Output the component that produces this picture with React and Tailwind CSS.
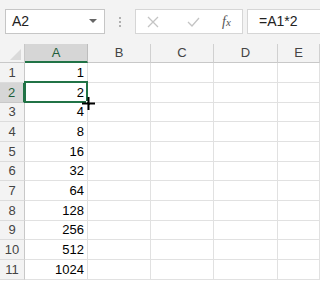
import React from 'react'

const font = { fontFamily: '"Liberation Sans", Arial, sans-serif' }

const cols = ['A', 'B', 'C', 'D', 'E']
const colW = ['w-[63px]', 'w-[63px]', 'w-[63px]', 'w-[64px]', 'flex-1']
const rows = [1, 2, 4, 8, 16, 32, 64, 128, 256, 512, 1024]
const rowH = ['h-[20px]', 'h-[20px]', 'h-[19px]', 'h-[20px]', 'h-[20px]', 'h-[19px]', 'h-[20px]', 'h-[20px]', 'h-[19px]', 'h-[20px]', 'h-[20px]']

function TopBar() {
  return (
    <div className="flex h-[44px] items-start bg-[#f3f3f3] pt-[9px] pl-[5px]">
      <div className="flex h-[25px] w-[100px] items-center justify-between border border-[#c6c6c6] bg-white pl-[6px] pr-[7px]">
        <span className="text-[14px] text-[#222]">A2</span>
        <svg width="8" height="5" viewBox="0 0 8 5"><path d="M0 0h8L4 4z" fill="#666" /></svg>
      </div>
      <div className="flex w-[30px] flex-col items-center gap-[2px] pt-[8px]">
        <span className="h-[2px] w-[2px] bg-[#b0b0b0]" />
        <span className="h-[2px] w-[2px] bg-[#b0b0b0]" />
        <span className="h-[2px] w-[2px] bg-[#b0b0b0]" />
      </div>
      <div className="flex h-[25px] w-[108px] items-center border border-[#d6d6d6] bg-white">
        <svg className="ml-[11px]" width="12" height="12" viewBox="0 0 12 12"><path d="M1 1l10 10M11 1L1 11" stroke="#c4c4c4" strokeWidth="1.3" /></svg>
        <svg className="ml-[28px]" width="13" height="10" viewBox="0 0 13 10"><path d="M1 5l4 4 7-8" stroke="#c4c4c4" strokeWidth="1.3" fill="none" /></svg>
        <span className="ml-[22px] text-[14px] italic text-[#555]" style={{ fontFamily: '"Liberation Serif", serif' }}>f<span className="text-[11px]">x</span></span>
      </div>
      <div className="ml-[4px] flex h-[25px] flex-1 items-center border border-r-0 border-[#d6d6d6] bg-white pl-[11px]">
        <span className="text-[14px] text-[#222]">=A1*2</span>
      </div>
    </div>
  )
}

function HeaderRow() {
  return (
    <div className="flex h-[19px]">
      <div className="relative w-[25px] border-r border-b border-[#c8c8c8] bg-[#f3f3f3]">
        <svg className="absolute right-[3px] bottom-[2px]" width="11" height="11" viewBox="0 0 11 11"><path d="M11 0v11H0z" fill="#dadada" /></svg>
      </div>
      {cols.map((c, i) => (
        <div
          key={c}
          className={`${colW[i]} flex items-center justify-center text-[13px] ${
            i === 0
              ? 'border-b-2 border-r border-b-[#217346] border-r-[#bdbdbd] bg-[#d6d6d6] text-[#1e5e3a]'
              : 'border-r border-b border-r-[#d0d0d0] border-b-[#c8c8c8] bg-[#f3f3f3] text-[#444]'
          }`}
        >
          {c}
        </div>
      ))}
    </div>
  )
}

function Row({ n, v }) {
  const sel = n === 2
  return (
    <div className={`flex ${rowH[n - 1]}`}>
      <div
        className={`flex w-[25px] items-center justify-center border-b text-[13px] ${
          sel
            ? 'border-r-2 border-r-[#217346] border-b-[#c8c8c8] bg-[#d6d6d6] text-[#1e5e3a]'
            : 'border-r border-r-[#c8c8c8] border-b-[#dcdcdc] bg-[#f3f3f3] text-[#444]'
        }`}
      >
        {n}
      </div>
      {cols.map((c, i) => (
        <div
          key={c}
          className={`${colW[i]} relative flex items-end justify-end border-r border-b border-[#e1e1e1] pr-[3px] text-[13px] leading-[18px] text-black`}
        >
          {i === 0 ? v : null}
          {sel && i === 0 && (
            <>
              <div className="absolute -top-[2px] -left-[1px] -right-[1px] -bottom-[1px] border-2 border-[#217346]" />
              <div className="absolute -right-[4px] -bottom-[4px] h-[5px] w-[5px] border border-white bg-[#217346]" />
              <svg className="absolute -right-[8px] -bottom-[8px] z-10" width="13" height="13" viewBox="0 0 13 13">
                <path d="M6.5 0v13M0 6.5h13" stroke="#000" strokeWidth="2" />
              </svg>
            </>
          )}
        </div>
      ))}
    </div>
  )
}

export default function App() {
  return (
    <div className="h-[283px] w-[320px] overflow-hidden bg-white" style={font}>
      <TopBar />
      <HeaderRow />
      {rows.map((v, i) => (
        <Row key={i} n={i + 1} v={v} />
      ))}
    </div>
  )
}
